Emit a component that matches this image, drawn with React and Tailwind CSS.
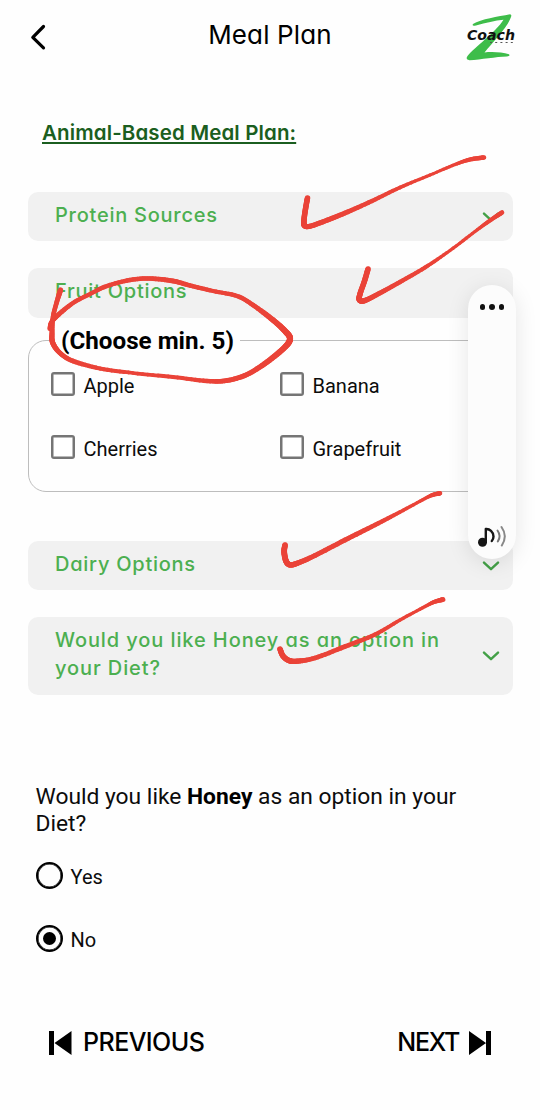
import React from "react";

const geo = "font-['Inter',sans-serif] [font-feature-settings:'cv11','ss03']";
const barText = `${geo} relative top-px mb-[6px] text-[20px] font-medium leading-7`;

function Chevron() {
  return (
    <svg className="h-[10px] w-[18px] shrink-0" viewBox="0 0 18 10" fill="none" stroke="#43a047" strokeWidth="2.4" strokeLinecap="round" strokeLinejoin="round">
      <path d="M2 1.6 9 8.2 16 1.6" />
    </svg>
  );
}

function Check({ label }) {
  return (
    <label className="flex h-6 items-center">
      <span className="h-6 w-6 shrink-0 rounded-[3px] border-[2.5px] border-[#757575] bg-white shadow-[inset_0_0_0_0.5px_#757575]" />
      <span className="ml-[9px] text-[20px] leading-6 relative top-0.5">{label}</span>
    </label>
  );
}

function Radio({ label, checked }) {
  return (
    <label className="flex h-[27px] items-center">
      <span className="flex h-[27px] w-[27px] items-center justify-center rounded-full border-2 border-black shadow-[inset_0_0_0_0.6px_#000]">
        {checked && <span className="h-[13px] w-[13px] rounded-full bg-black" />}
      </span>
      <span className="ml-2 text-[20px] leading-6 relative top-px">{label}</span>
    </label>
  );
}

function Logo() {
  return (
    <svg className="h-[52px] w-[56px]" viewBox="0 0 56 52">
      <path d="M10 13C18 8 35 5.500 47 3.200Q49 3.500 48 6C44 17 29 32 21.500 41.500C28 40.500 39 41 46 43.300Q47.500 45 44 45.500C33 45.800 18 48.600 6.500 49.200Q2 49 4.500 45C12 36 33 21 40.500 8.800C32 9.500 23 12 13 14.500Q8.500 15.500 10 13Z" fill="#3ebd4a" />
      <text x="4" y="29" fontFamily="DejaVu Sans, sans-serif" fontStyle="italic" fontWeight="700" fontSize="14" textLength="48" lengthAdjust="spacingAndGlyphs" fill="#111">Coach</text>
      <path d="M27 31.500H51" stroke="#555" strokeWidth="1.200" strokeDasharray="2 3.200" />
    </svg>
  );
}

function Bar({ children, className }) {
  return (
    <div className={`flex items-center justify-between rounded-[10px] bg-[#f1f1f1] pl-[27px] pr-[13px] text-[#4caf50] ${className}`}>
      {children}
    </div>
  );
}

// Each stroke is a list of [x, y, width] samples along the pen's path.
const STROKES = [
  [[307.5, 198, 5], [305.5, 209, 5], [304, 220, 5], [304.5, 225.5, 5], [310, 226.2, 4.6], [325, 221, 4.6], [345, 213, 4.4], [372, 201, 4], [400, 187.5, 3.4], [430, 175, 2.8], [455, 164.5, 3], [470, 159.5, 3.8], [484, 157.5, 4.2]],
  [[368, 269, 5], [364.5, 281, 5], [360, 294, 5], [359.5, 300, 5], [365, 300.5, 4.8], [380, 293, 4.4], [400, 282, 4], [425, 267.5, 3.6], [450, 250.5, 3], [475, 231.5, 3], [490, 220.5, 3.6], [502, 212.5, 4.2]],
  [[49.5, 329, 3.5], [51, 323, 4], [57, 316, 4.4], [73, 303, 4], [90, 294, 3.8], [107, 286, 4], [130, 280, 4], [150, 278.5, 4.2], [173, 281, 4.4], [190, 285.5, 4.2], [213, 291, 3.8], [237, 296, 4], [253, 305, 4.2], [273, 320, 5], [285, 331, 5.4], [290, 338.5, 5.6], [285, 347, 5.4], [267, 362, 5], [247, 374.5, 4.6], [227, 380.5, 4.4], [207, 381, 4], [173, 377, 3.6], [133, 373, 3.4], [100, 368.5, 3.8], [73, 361, 4.2], [60, 353, 4.4], [52.8, 343, 4.8], [52, 333, 4.6], [53, 317, 4.2], [56.5, 303, 4.2], [60.5, 290, 4.8]],
  [[285, 545, 5], [284.2, 552, 5.2], [286, 561, 5.2], [290, 564.8, 5], [298, 563, 4.8], [315, 555.5, 4.4], [345, 540, 4.4], [375, 525, 4.2], [400, 512, 3.4], [425, 498.5, 3], [433, 494.8, 3.6], [440, 493.3, 4.2]],
  [[280, 649, 5], [283, 656, 5], [289, 660.5, 5], [297, 661.2, 4.8], [315, 658, 4.2], [345, 646.5, 4.2], [375, 634.5, 3.8], [400, 620, 3.2], [425, 606.5, 3], [434, 602, 3.6], [443, 599.5, 4.4]],
];

function samples(points) {
  const out = [];
  for (let i = 0; i < points.length - 1; i++) {
    const a = points[Math.max(0, i - 1)];
    const b = points[i];
    const c = points[i + 1];
    const d = points[Math.min(points.length - 1, i + 2)];
    for (let s = 0; s < 8; s++) {
      const t = s / 8;
      out.push([0, 1, 2].map((k) =>
        0.5 * (2 * b[k] + (c[k] - a[k]) * t + (2 * a[k] - 5 * b[k] + 4 * c[k] - d[k]) * t * t + (3 * b[k] - a[k] - 3 * c[k] + d[k]) * t * t * t)
      ));
    }
  }
  out.push(points[points.length - 1]);
  return out;
}

function Ink() {
  return (
    <svg className="pointer-events-none absolute inset-0 h-[1110px] w-[540px]" viewBox="0 0 540 1110" stroke="#ea4338" strokeLinecap="round">
      {STROKES.map((stroke, i) => {
        const pts = samples(stroke);
        return (
          <g key={i}>
            {pts.slice(1).map((p, j) => (
              <line key={j} x1={pts[j][0]} y1={pts[j][1]} x2={p[0]} y2={p[1]} strokeWidth={p[2] * 1.1} />
            ))}
          </g>
        );
      })}
    </svg>
  );
}

function SoundPanel() {
  return (
    <div className="absolute left-[468px] top-[285px] flex h-[274px] w-[48px] flex-col items-center justify-between rounded-full bg-[#fcfcfc] pb-[10px] pt-[19px] shadow-[0_4px_22px_rgba(0,0,0,0.10)]">
      <div className="flex gap-[4px]">
        <span className="h-[5.5px] w-[5.5px] rounded-full bg-[#111]" />
        <span className="h-[5.5px] w-[5.5px] rounded-full bg-[#111]" />
        <span className="h-[5.5px] w-[5.5px] rounded-full bg-[#111]" />
      </div>
      <svg className="h-[24px] w-[30px]" viewBox="0 0 30 24" fill="none" strokeLinecap="round" strokeLinejoin="round">
        <circle cx="5.500" cy="17.300" r="4.500" fill="#151515" />
        <path d="M8.800 17V4C12.500 3.500 16.500 7 16.500 11.500Q16.500 14 14.800 16" stroke="#151515" strokeWidth="2.400" />
        <path d="M20.500 5.500Q24.500 11 20.800 16.500" stroke="#777" strokeWidth="2" />
        <path d="M24.500 2Q31 11 24.800 20.500" stroke="#888" strokeWidth="2" />
      </svg>
    </div>
  );
}

export default function App() {
  return (
    <div className="relative h-[1110px] w-[540px] overflow-hidden bg-[#fefefe] font-['Roboto',sans-serif] text-[#0c0c0c]">
      <header className="grid h-[70px] grid-cols-[80px_1fr_80px]">
        <svg className="ml-[28px] mt-[23px] h-[28px] w-[20px]" viewBox="0 0 20 28" fill="none" stroke="#000" strokeWidth="3.2" strokeLinecap="round" strokeLinejoin="round">
          <path d="M15.500 3.500 4.800 14.300 15.500 24.800" />
        </svg>
        <h1 className={`${geo} pt-[19px] text-center text-[26px] font-normal leading-8 tracking-[0.15px] text-black`}>Meal Plan</h1>
        <div className="pl-[3px] pt-[11px]"><Logo /></div>
      </header>

      <main className="flex flex-col pl-7 pr-[27px]">
        <h2 className={`${geo} ml-[14px] mt-[50px] h-[26px] text-[20.5px] font-semibold leading-[26px] tracking-[0.12px] text-[#1b5e20] underline decoration-[1.5px] underline-offset-[2px]`}>Animal-Based Meal Plan:</h2>

        <Bar className="mt-[46px] h-[49px]">
          <span className={`${barText} tracking-[0.75px]`}>Protein Sources</span>
          <Chevron />
        </Bar>
        <Bar className="mt-[27px] h-[50px]">
          <span className={`${barText} tracking-[0.75px]`}>Fruit Options</span>
        </Bar>

        <fieldset className="mt-[7px] h-[167px] rounded-[18px] border border-[#bdbdbd] pl-[21.5px]">
          <legend className="ml-[3.5px] h-[31px] pl-[7px] pr-[6px] text-[24.2px] font-bold leading-[33px] text-black">(Choose min. 5)</legend>
          <div className="mt-[16px] grid grid-cols-[229px_1fr] gap-y-[39px]">
            <Check label="Apple" />
            <Check label="Banana" />
            <Check label="Cherries" />
            <Check label="Grapefruit" />
          </div>
        </fieldset>

        <Bar className="mt-[49px] h-[49px]">
          <span className={`${barText} tracking-[0.75px]`}>Dairy Options</span>
          <Chevron />
        </Bar>
        <Bar className="mt-[27px] h-[78px]">
          <span className={`${barText} tracking-[0.9px]`}>Would you like Honey as an option in<br />your Diet?</span>
          <Chevron />
        </Bar>

        <section className="ml-[7.5px] mt-[88px]">
          <p className="text-[22.8px] leading-[27px]">Would you like <b className="text-black">Honey</b> as an option in your<br />Diet?</p>
          <div className="mt-[25px] flex flex-col gap-9">
            <Radio label="Yes" />
            <Radio label="No" checked />
          </div>
        </section>
      </main>

      <footer className="mt-[73px] flex items-center justify-between pl-[49px] pr-[49px] text-black">
        <div className="flex items-center">
          <svg className="mt-1 h-[24px] w-[23px]" viewBox="0 0 23 24"><path d="M0 0H5V24H0ZM22.500 0V24L5.500 12Z" /></svg>
          <span className={`${geo} relative top-px ml-[11px] text-[25px] font-medium leading-8 tracking-[-0.55px]`}>PREVIOUS</span>
        </div>
        <div className="flex items-center">
          <span className={`${geo} relative top-px mr-[10px] text-[25px] font-medium leading-8 tracking-[-1.3px]`}>NEXT</span>
          <svg className="mt-1 h-[24px] w-[22px]" viewBox="0 0 22 24"><path d="M17 0H22V24H17ZM0 0V24L17 12Z" /></svg>
        </div>
      </footer>

      <Ink />
      <SoundPanel />
    </div>
  );
}
